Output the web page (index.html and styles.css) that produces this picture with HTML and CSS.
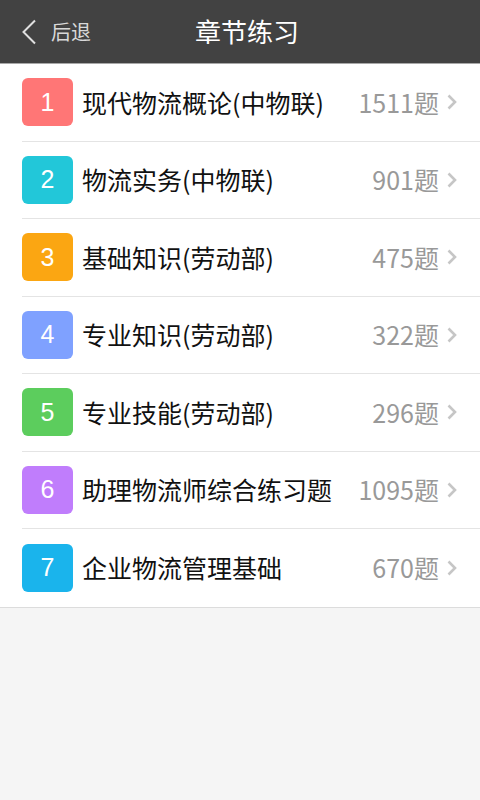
FILE: index.html
```html
<!DOCTYPE html>
<html lang="zh">
<head>
<meta charset="utf-8">
<link rel="stylesheet" href="styles.css">
</head>
<body>
<header class="bar">
  <div class="back">
    <svg class="back-icon" width="16" height="26" viewBox="0 0 16 26"><path d="M14 1.5 L2.5 13 L14 24.5" fill="none" stroke="#e0e0e0" stroke-width="2"/></svg>
    <span class="back-text">后退</span>
  </div>
  <h1 class="title">章节练习</h1>
</header>
<ul class="list">
  <li class="row"><span class="badge c1">1</span><span class="name">现代物流概论(中物联)</span><span class="count">1511题</span><svg class="chev" width="10" height="16" viewBox="0 0 10 16"><path d="M1.5 1.5 L8 8 L1.5 14.5" fill="none" stroke="#c6c6c6" stroke-width="2.6"/></svg></li>
  <li class="row"><span class="badge c2">2</span><span class="name">物流实务(中物联)</span><span class="count">901题</span><svg class="chev" width="10" height="16" viewBox="0 0 10 16"><path d="M1.5 1.5 L8 8 L1.5 14.5" fill="none" stroke="#c6c6c6" stroke-width="2.6"/></svg></li>
  <li class="row"><span class="badge c3">3</span><span class="name">基础知识(劳动部)</span><span class="count">475题</span><svg class="chev" width="10" height="16" viewBox="0 0 10 16"><path d="M1.5 1.5 L8 8 L1.5 14.5" fill="none" stroke="#c6c6c6" stroke-width="2.6"/></svg></li>
  <li class="row"><span class="badge c4">4</span><span class="name">专业知识(劳动部)</span><span class="count">322题</span><svg class="chev" width="10" height="16" viewBox="0 0 10 16"><path d="M1.5 1.5 L8 8 L1.5 14.5" fill="none" stroke="#c6c6c6" stroke-width="2.6"/></svg></li>
  <li class="row"><span class="badge c5">5</span><span class="name">专业技能(劳动部)</span><span class="count">296题</span><svg class="chev" width="10" height="16" viewBox="0 0 10 16"><path d="M1.5 1.5 L8 8 L1.5 14.5" fill="none" stroke="#c6c6c6" stroke-width="2.6"/></svg></li>
  <li class="row"><span class="badge c6">6</span><span class="name">助理物流师综合练习题</span><span class="count">1095题</span><svg class="chev" width="10" height="16" viewBox="0 0 10 16"><path d="M1.5 1.5 L8 8 L1.5 14.5" fill="none" stroke="#c6c6c6" stroke-width="2.6"/></svg></li>
  <li class="row last"><span class="badge c7">7</span><span class="name">企业物流管理基础</span><span class="count">670题</span><svg class="chev" width="10" height="16" viewBox="0 0 10 16"><path d="M1.5 1.5 L8 8 L1.5 14.5" fill="none" stroke="#c6c6c6" stroke-width="2.6"/></svg></li>
</ul>
</body>
</html>
```
FILE: styles.css
```css
* { box-sizing: border-box; }
html, body { margin: 0; padding: 0; }
body {
  width: 480px;
  height: 800px;
  background: #f5f5f5;
  font-family: "Noto Sans CJK SC", "Noto Sans", sans-serif;
}
.bar {
  height: 64px;
  background: #424242;
  border-bottom: 1px solid #a8a8a8;
  display: flex;
  align-items: center;
  position: relative;
}
.back {
  display: flex;
  align-items: center;
  padding-left: 21px;
  gap: 14px;
}
.back-icon { display: block; }
.back-text {
  color: #d8d8d8;
  font-size: 20px;
  line-height: 1;
}
.title {
  position: absolute;
  left: 0;
  right: 0;
  top: 0;
  height: 61px;
  margin: 0;
  padding-left: 14px;
  display: flex;
  align-items: center;
  justify-content: center;
  color: #ffffff;
  font-size: 26px;
  line-height: 1;
  font-weight: normal;
  pointer-events: none;
}
.list {
  list-style: none;
  margin: 0;
  padding: 0 0 0 22px;
  background: #ffffff;
  border-bottom: 1px solid #dcdcdc;
}
.row {
  height: 77.5px;
  display: flex;
  align-items: center;
  border-bottom: 1px solid #e4e4e4;
  padding-right: 23px;
}
.row.last { border-bottom: none; }
.badge {
  width: 51px;
  height: 48px;
  border-radius: 6px;
  color: #fff;
  font-family: "Liberation Sans", Arial, sans-serif;
  font-size: 25px;
  display: flex;
  align-items: center;
  justify-content: center;
  flex: none;
}
.c1 { background: #ff7676; }
.c2 { background: #22c7d9; }
.c3 { background: #fba612; }
.c4 { background: #7fa1ff; }
.c5 { background: #5ccd5d; }
.c6 { background: #c07dfc; }
.c7 { background: #1ab4ec; }
.name {
  margin-left: 9px;
  font-size: 25px;
  line-height: 1;
  color: #111;
  flex: 1;
  white-space: nowrap;
}
.count {
  font-size: 25px;
  line-height: 1;
  color: #999;
  white-space: nowrap;
}
.chev {
  display: block;
  margin-left: 8px;
  flex: none;
}
```
